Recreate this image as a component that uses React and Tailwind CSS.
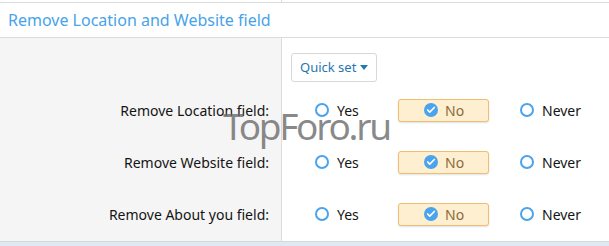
import { Check } from 'lucide-react'

const rows = [
  'Remove Location field:',
  'Remove Website field:',
  'Remove About you field:',
]

function Radio() {
  return <span className="inline-block w-[14px] h-[14px] rounded-full border-2 border-[#4aa3ec] bg-white" />
}

function Checked() {
  return (
    <span className="flex items-center justify-center w-[14px] h-[14px] rounded-full bg-[#4aa3ec]">
      <Check size={10} strokeWidth={4} className="text-white" />
    </span>
  )
}

export default function App() {
  return (
    <div
      className="relative w-[609px] h-[246px] bg-white overflow-hidden text-[#141414]"
      style={{ fontFamily: '"Noto Sans", "Open Sans", sans-serif' }}
    >
      {/* previous row edge */}
      <div className="flex h-[3px] border-b border-[#dcdcdc]">
        <div className="w-[282px] border-r border-[#dcdcdc]" />
      </div>

      {/* section title */}
      <div className="h-[35px] border-b border-[#dcdcdc] pl-2 flex items-center text-[16px] text-[#47a3ea]">
        Remove Location and Website field
      </div>

      {/* body */}
      <div className="border-b border-[#d8d8d8]">
        <div className="flex h-[46px]">
          <div className="w-[282px] bg-[#f5f5f5] border-r border-[#dcdcdc]" />
          <div className="pl-[9px] pt-[15px]">
            <button className="h-[29px] px-[8px] flex items-center gap-1 border border-[#d8d8d8] rounded-[3px] bg-white text-[13px] text-[#2577b1]">
              Quick set
              <span className="w-0 h-0 border-l-[4px] border-r-[4px] border-t-[5px] border-l-transparent border-r-transparent border-t-[#2577b1]" />
            </button>
          </div>
        </div>

        {rows.map((label) => (
          <div key={label} className="flex h-[52px]">
            <div className="w-[282px] bg-[#f5f5f5] border-r border-[#dcdcdc] flex items-center justify-end pr-[12px] text-[14px]">
              {label}
            </div>
            <div className="flex items-center text-[14px]">
              <div className="w-[116px] pl-[33px] flex items-center gap-2">
                <Radio />
                <span>Yes</span>
              </div>
              <div className="w-[91px] h-[23px] pl-[25px] flex items-center gap-[7px] rounded-[3px] border border-[#f0bd72] bg-[#fdefcf] shadow-[0_1px_2px_rgba(0,0,0,0.12)] text-[#8c6a3c]">
                <Checked />
                <span>No</span>
              </div>
              <div className="ml-[31px] flex items-center gap-2">
                <Radio />
                <span>Never</span>
              </div>
            </div>
          </div>
        ))}
        <div className="flex h-[1px]">
          <div className="w-[282px] bg-[#f5f5f5] border-r border-[#dcdcdc]" />
        </div>
      </div>
      <div className="h-[4px] bg-[#dfe9f4]" />

      {/* watermark */}
      <div className="absolute left-[223px] top-[107px] text-[37px] leading-none tracking-[-2.3px] text-[rgba(105,105,105,0.78)] pointer-events-none">
        TopForo.ru
      </div>
    </div>
  )
}
